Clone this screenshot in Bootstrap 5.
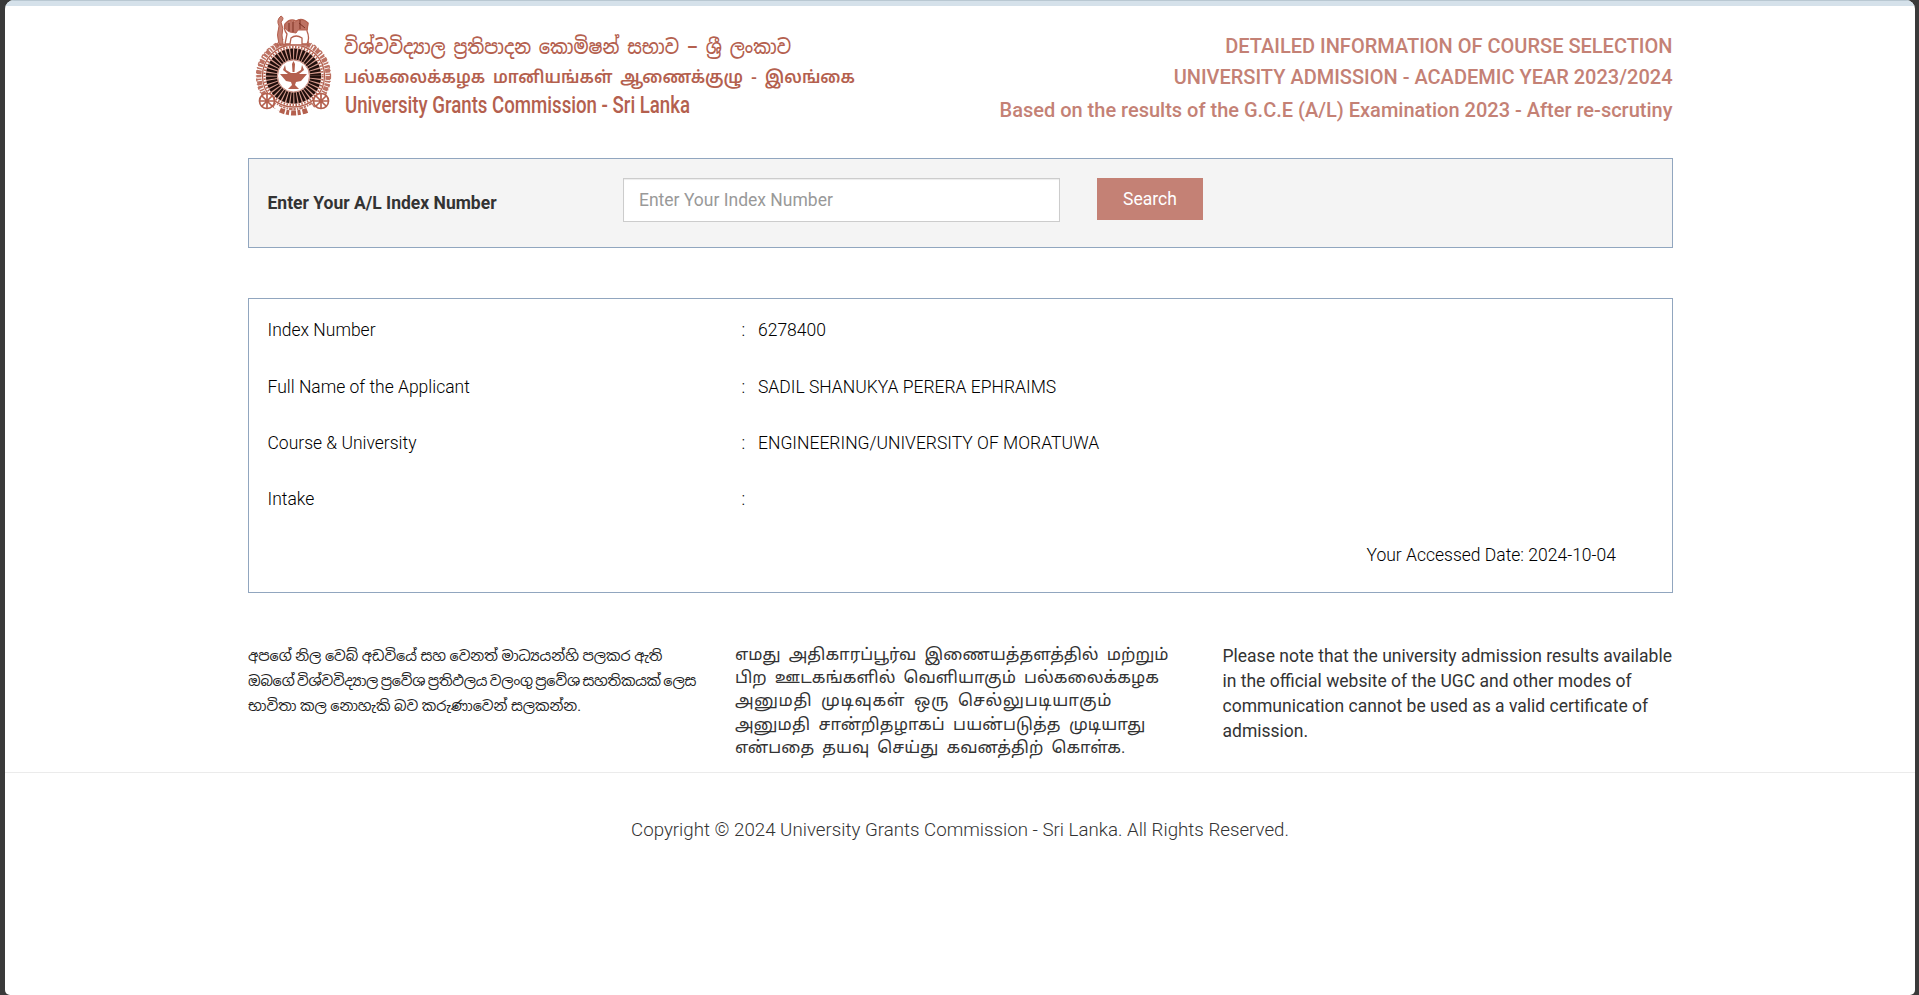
<!DOCTYPE html>
<html lang="en">
<head>
<meta charset="utf-8">
<title>University Grants Commission - Sri Lanka</title>
<link href="https://cdn.jsdelivr.net/npm/bootstrap@5.3.0/dist/css/bootstrap.min.css" rel="stylesheet">
<style>
  body { background: #3a3a3a; font-family: Roboto, "Noto Sans Sinhala", "Noto Sans Tamil", "Noto Sans", sans-serif; font-size: 17.5px; line-height: 25px; color: #333; height: 995px; overflow: hidden; }
  .sheet { margin: 0 4px 0 5px; height: 995px; background: #fff; border-radius: 9px 9px 5px 5px; overflow: hidden; }
  .topbar { height: 6px; background: #d5e1ea; border-top: 1px solid #b9c8d2; }
  .wrap { width: 1425px; margin-left: 243px; }
  .masthead { height: 152px; }
  .masthead svg { overflow: visible; }
  .titles { color: #c48175; font-weight: 500; font-size: 20px; padding: 25px .5px 0 0; }
  .titles div { line-height: 31px; white-space: nowrap; }
  .titles div:last-child { line-height: 35px; }
  .panel { border: 1px solid #91a6bf; }
  .searchbox { background: #f4f4f4; height: 90px; padding: 19px 0 0 18.5px; }
  .searchbox label { width: 355.5px; font-weight: 700; line-height: 51px; }
  .searchbox .form-control { width: 437px; height: 44px; border: 1px solid #ccc; border-radius: 0; padding: 0 15px 1px; font-size: 17.5px; box-shadow: inset 0 1px 1px rgba(0,0,0,.075); }
  .searchbox .form-control::placeholder { color: #999; opacity: 1; }
  .searchbox .btn { margin-left: 37px; width: 106px; height: 42px; border: 0; border-radius: 0; background: #c48175; color: #fff; font-size: 17.5px; padding: 0; }
  .details { height: 295px; margin-top: 50px; padding: 18.5px 0 0 18.5px; font-weight: 300; color: #000; }
  .details .entry { height: 56.2px; }
  .details .entry:first-child { height: 57px; }
  .details .entry span:first-child { width: 474px; }
  .details .entry span:nth-child(2) { width: 16.5px; }
  .details .accessed { padding-right: 56px; }
  .notes { margin-top: 50px; height: 129px; }
  .notes div { white-space: nowrap; }
  .si { width: 487px; font-size: 14.4px; padding-top: .5px; color: #222; }
  .si .tight { word-spacing: -.8px; letter-spacing: -.24px; }
  .ta { width: 487.5px; font-size: 16.6px; line-height: 23.2px; }
  .ta span { word-spacing: 4px; }
  .ta .loose { letter-spacing: .68px; }
  .ta .wider { letter-spacing: .15px; }
  .en { padding-top: 1px; }
  .foot { border-top: 1px solid #ebebeb; font-weight: 300; font-size: 18.72px; padding-top: 45px; }
</style>
</head>
<body>
<div class="sheet">
  <div class="topbar"></div>
  <div class="wrap">
    <header class="masthead d-flex justify-content-between">
      <svg width="620" height="130" viewBox="248 6 620 130" fill="#b4604e">
        <g fill="none" stroke="#b4604e">
          <circle cx="293.500" cy="76" r="34.500" stroke-width="5" stroke-dasharray="4 1 1.500 1.200 2.500 .8" stroke="#bd7263"/>
          <circle cx="293.500" cy="76" r="37" stroke-width="1.300" stroke-dasharray="3 2 1 2.500" stroke="#bd7263"/>
          <circle cx="293.500" cy="76" r="31" fill="#fff" stroke-width="1.300"/>
          <circle cx="293.500" cy="76" r="29" stroke-width="2.200" stroke-dasharray="1.500 1.500"/>
          <circle cx="293.500" cy="76" r="22" stroke="#d59b8e" stroke-width="12"/>
          <circle cx="293.500" cy="76" r="22" stroke="#210f0c" stroke-width="11" stroke-dasharray="2.350 1.106"/>
          <circle cx="293.500" cy="76" r="16" fill="#fff" stroke="#c98d80" stroke-width="1"/>
          <g fill="#e7c5bd" stroke-width="1.700">
            <circle cx="267" cy="101" r="7.500" fill="#fff"/><path d="M267 94V108M260 101H274M262 96L272 106M262 106L272 96"/>
            <circle cx="321" cy="101" r="7.500" fill="#fff"/><path d="M321 94V108M314 101H328M316 96L326 106M316 106L326 96"/>
            <path d="M275 106Q293.500 119 313 106" fill="none" stroke="#fff" stroke-width="4"/>
            <path d="M280 110Q293.500 116 308 110" fill="none" stroke-width="5" stroke-dasharray="5 1.500 3 2"/>
          </g>
          <path d="M277 46V42Q281 41 284 44L287 46H307V38L304 26H284V40H277Z" fill="#fff" stroke="none"/>
          <path d="M279 44Q276 35 279 26Q276 20 281 16Q285 18 281 22Q284 28 282 35L283 44Z" fill="#c98577"/>
          <path d="M285 24Q290 18 296 21Q302 17 308 23L307 31Q310 38 307 44H302V38Q296 34 291 38L290 44H285L287 34Q283 29 285 24Z" fill="#fff" stroke-width="1.300"/>
          <path d="M285 24Q289 19 295 22Q301 17 308 23L307 30H298L296 33L290 32Q284 30 285 24Z" fill="#bd7263"/>
          <path d="M289 23V31M293 22V32M299 23L305 28M300 20V29" stroke="#7c3123"/>
          <path d="M277 45H309" stroke-width="1.600"/>
        </g>
        <g fill="#b4604e" transform="translate(-1 0)">
          <path d="M293 64L294.500 61L296 64L295.500 72H293.500Z"/>
          <path d="M286 65L284 70L289 74L290 79H299L300 74L305 70L303 65L302 70L297 73H292L287 70Z"/>
          <path d="M281 74H308L302 81L297 82L296 85L300 89H289L293 85L292 82L287 81Z"/>
        </g>
        <text x="344" y="54" font-size="20" textLength="447" lengthAdjust="spacingAndGlyphs" font-weight="500" word-spacing="4">විශ්වවිද්‍යාල ප්‍රතිපාදන කොමිෂන් සභාව – ශ්‍රී ලංකාව</text>
        <text x="344" y="83" font-size="17" textLength="511" lengthAdjust="spacingAndGlyphs" font-weight="600" word-spacing="4">பல்கலைக்கழக மானியங்கள் ஆணைக்குழு - இலங்கை</text>
        <text x="345" y="113" font-size="23" textLength="345" lengthAdjust="spacingAndGlyphs" font-weight="500">University Grants Commission - Sri Lanka</text>
      </svg>
      <div class="titles text-end">
        <div>DETAILED INFORMATION OF COURSE SELECTION</div>
        <div>UNIVERSITY ADMISSION - ACADEMIC YEAR 2023/2024</div>
        <div>Based on the results of the G.C.E (A/L) Examination 2023 - After re-scrutiny</div>
      </div>
    </header>

    <form class="panel searchbox d-flex align-items-start">
      <label for="idx">Enter Your A/L Index Number</label>
      <input id="idx" type="text" class="form-control" placeholder="Enter Your Index Number">
      <button type="button" class="btn">Search</button>
    </form>

    <section class="panel details">
      <div class="entry d-flex"><span>Index Number</span><span>:</span><span>6278400</span></div>
      <div class="entry d-flex"><span>Full Name of the Applicant</span><span>:</span><span>SADIL SHANUKYA PERERA EPHRAIMS</span></div>
      <div class="entry d-flex"><span>Course &amp; University</span><span>:</span><span>ENGINEERING/UNIVERSITY OF MORATUWA</span></div>
      <div class="entry d-flex"><span>Intake</span><span>:</span></div>
      <div class="accessed text-end">Your Accessed Date: 2024-10-04</div>
    </section>

    <section class="notes d-flex">
      <div class="si">අපගේ නිල වෙබ් අඩවියේ සහ වෙනත් මාධ්‍යයන්හි පලකර ඇති<br><span class="tight">ඔබගේ විශ්වවිද්‍යාල ප්‍රවේශ ප්‍රතිඵලය වලංගු ප්‍රවේශ සහතිකයක් ලෙස</span><br>භාවිතා කල නොහැකි බව කරුණාවෙන් සලකන්න.</div>
      <div class="ta"><span>எமது அதிகாரப்பூர்வ இணையத்தளத்தில் மற்றும்</span><br><span>பிற ஊடகங்களில் வெளியாகும் பல்கலைக்கழக</span><br><span class="loose">அனுமதி முடிவுகள் ஒரு செல்லுபடியாகும்</span><br><span class="wider">அனுமதி சான்றிதழாகப் பயன்படுத்த முடியாது</span><br><span>என்பதை தயவு செய்து கவனத்திற் கொள்க.</span></div>
      <div class="en">Please note that the university admission results available<br>in the official website of the UGC and other modes of<br>communication cannot be used as a valid certificate of<br>admission.</div>
    </section>
  </div>
  <footer class="foot text-center">Copyright © 2024 University Grants Commission - Sri Lanka. All Rights Reserved.</footer>
</div>
<script src="https://cdn.jsdelivr.net/npm/bootstrap@5.3.0/dist/js/bootstrap.bundle.min.js"></script>
</body>
</html>
